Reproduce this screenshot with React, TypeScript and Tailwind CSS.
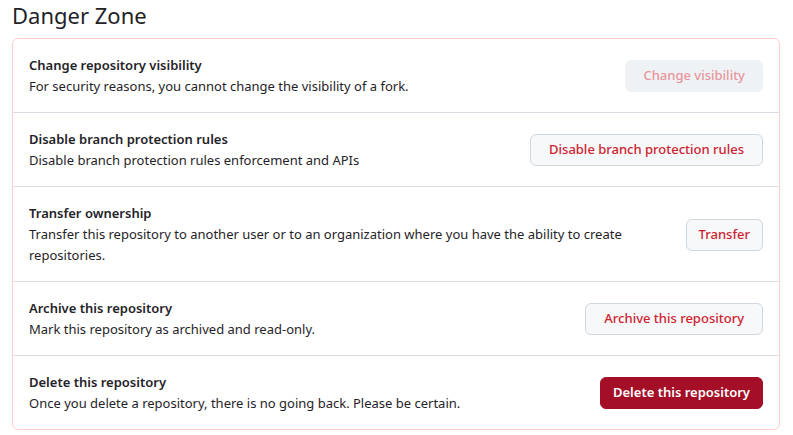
import React from "react";

type Row = {
  title: string;
  desc: string;
  button: string;
  variant: "disabled" | "danger" | "solid";
  pad: string;
};

const rows: Row[] = [
  {
    title: "Change repository visibility",
    desc: "For security reasons, you cannot change the visibility of a fork.",
    button: "Change visibility",
    variant: "disabled",
    pad: "px-[17px]",
  },
  {
    title: "Disable branch protection rules",
    desc: "Disable branch protection rules enforcement and APIs",
    button: "Disable branch protection rules",
    variant: "danger",
    pad: "px-[18px]",
  },
  {
    title: "Transfer ownership",
    desc: "Transfer this repository to another user or to an organization where you have the ability to create repositories.",
    button: "Transfer",
    variant: "danger",
    pad: "px-3",
  },
  {
    title: "Archive this repository",
    desc: "Mark this repository as archived and read-only.",
    button: "Archive this repository",
    variant: "danger",
    pad: "px-[18px]",
  },
  {
    title: "Delete this repository",
    desc: "Once you delete a repository, there is no going back. Please be certain.",
    button: "Delete this repository",
    variant: "solid",
    pad: "px-3",
  },
];

function Btn({ label, variant, pad }: { label: string; variant: Row["variant"]; pad: string }) {
  if (variant === "disabled") {
    return (
      <button className={`h-8 shrink-0 whitespace-nowrap rounded-md border border-[#eff2f5] bg-[#eff2f5] text-[13px] font-medium text-[#e8959b] ${pad}`}>
        {label}
      </button>
    );
  }
  if (variant === "solid") {
    return (
      <button className={`h-8 shrink-0 whitespace-nowrap rounded-md border border-[#a40e26] bg-[#a40e26] text-[13px] font-semibold text-white ${pad}`}>
        {label}
      </button>
    );
  }
  return (
    <button className={`h-8 shrink-0 whitespace-nowrap rounded-md border border-[#d0d7de] bg-[#f6f8fa] text-[13px] font-medium text-[#cf222e] ${pad}`}>
      {label}
    </button>
  );
}

export default function App() {
  return (
    <div
      className="min-h-[435px] w-[793px] bg-white pl-3 pr-[13px] text-[#1f2328]"
      style={{ fontFamily: '"Noto Sans", "Open Sans", Arial, sans-serif' }}
    >
      <h2 className="mb-2 text-[22px] font-normal leading-[30px]">Danger Zone</h2>
      <div className="rounded-md border border-[#ffcecb]">
        {rows.map((r, i) => (
          <div
            key={r.title}
            className={`flex items-center gap-4 px-4 pt-4 pb-[15px] ${i > 0 ? "border-t border-[#d8dee4]" : ""}`}
          >
            <div className="min-w-0 flex-1 text-[13px] leading-[21px]">
              <div className="font-semibold">{r.title}</div>
              <div>{r.desc}</div>
            </div>
            <Btn label={r.button} variant={r.variant} pad={r.pad} />
          </div>
        ))}
      </div>
    </div>
  );
}
